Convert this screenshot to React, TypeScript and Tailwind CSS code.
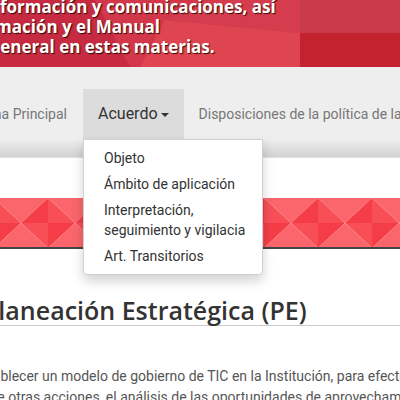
import React from 'react';

var HeaderBg = () => (
    <svg className="absolute inset-0 w-full h-full" viewBox="0 0 400 67" preserveAspectRatio="none">
        <rect width="400" height="67" fill="#c8293e" />
        <polygon points="0,0 110,0 150,67 0,67" fill="#c62b42" />
        <polygon points="95,0 300,0 300,33 230,67 130,67" fill="#d3374a" />
        <polygon points="165,20 300,33 300,67 140,67" fill="#df4451" />
        <polygon points="165,20 210,0 300,0 300,33" fill="#d53d4e" />
        <polygon points="300,0 400,0 400,33 300,33" fill="#c93a4b" />
        <polygon points="300,33 400,33 400,67 300,67" fill="#c3222e" />
    </svg>
);

var Band = () => (
    <svg width="100%" height="49" className="block">
        <defs>
            <pattern id="tri" width="54" height="50" patternUnits="userSpaceOnUse" x="-6" y="0">
                <polygon points="0,0 27,0 27,25" fill="#fa666b" />
                <polygon points="0,0 0,25 27,25" fill="#f84f57" />
                <polygon points="27,0 54,0 27,25" fill="#fa666b" />
                <polygon points="54,0 54,25 27,25" fill="#f43d47" />
                <polygon points="0,25 27,25 0,50" fill="#f43d47" />
                <polygon points="27,25 27,50 0,50" fill="#fa666b" />
                <polygon points="27,25 54,25 54,50" fill="#f84f57" />
                <polygon points="27,25 27,50 54,50" fill="#fa666b" />
            </pattern>
        </defs>
        <rect width="100%" height="49" fill="url(#tri)" />
    </svg>
);

export default function App() {
    var items = ['Objeto', 'Ámbito de aplicación'];

    return (
        <div className="w-[400px] h-[400px] overflow-hidden bg-white font-['Roboto',sans-serif]">
            {/* encabezado rojo */}
            <div className="relative h-[67px] overflow-hidden">
                <HeaderBg />
                <div className="relative -mt-[3px] font-['Open_Sans',sans-serif] font-bold text-[17px] leading-[20px] text-white whitespace-nowrap [text-shadow:1px_1px_1px_rgba(40,10,0,0.95)]">
                    <div>formación y comunicaciones, así</div>
                    <div className="-ml-[5px]">mación y el Manual</div>
                    <div className="-ml-[12px]">General en estas materias.</div>
                </div>
            </div>

            {/* menu */}
            <div className="bg-[#eeeeee] pt-[22px]">
                <div className="flex h-[50px] items-center text-[14px] whitespace-nowrap">
                    <div className="shrink-0 w-[83px] h-full flex items-center justify-end overflow-hidden pr-[16px] text-[#777]">
                        <span className="shrink-0">Página Principal</span>
                    </div>
                    <div className="shrink-0 relative h-full bg-[#dcdcdc] px-[15px] flex items-center text-[16px] text-[#333]">
                        Acuerdo
                        <span className="ml-[3px] mt-[2px] w-0 h-0 border-l-[4px] border-r-[4px] border-t-[4px] border-l-transparent border-r-transparent border-t-[#333]"></span>
                        <div className="absolute left-0 top-full z-10 w-[180px] bg-white border border-[#d0d0d0] rounded-b-[4px] shadow-[0_6px_12px_rgba(0,0,0,0.175)] py-[5px] text-[14px] leading-[20px] text-[#333]">
                            {items.map((it) => (
                                <div key={it} className="px-[20px] py-[3px]">{it}</div>
                            ))}
                            <div className="px-[20px] py-[3px]">Interpretación,<br />seguimiento y vigilacia</div>
                            <div className="px-[20px] py-[3px]">Art. Transitorios</div>
                        </div>
                    </div>
                    <div className="shrink-0 pl-[15px] text-[#777]">Disposiciones de la política de la Seguridad</div>
                </div>
                <div className="h-[19px] bg-gradient-to-b from-[#eeeeee] to-[#d2d2d2] border-b border-[#e2e2e2]"></div>
            </div>

            <div className="h-[40px]"></div>
            <Band />
            <div className="h-[2px] bg-[#444]"></div>

            {/* contenido */}
            <div className="overflow-hidden">
                <h1 className="mt-[46px] -ml-[17px] font-['Open_Sans',sans-serif] font-semibold text-[25px] leading-[30px] text-[#333] border-b border-[#cccccc] whitespace-nowrap">
                    Planeación Estratégica (PE)
                </h1>
                <div className="mt-[40px] -ml-[27px] text-[14px] leading-[21px] text-[#555] whitespace-nowrap">
                    <div>Establecer un modelo de gobierno de TIC en la Institución, para efectuar,</div>
                    <div>entre otras acciones, el análisis de las oportunidades de aprovechamiento</div>
                </div>
            </div>
        </div>
    );
}
